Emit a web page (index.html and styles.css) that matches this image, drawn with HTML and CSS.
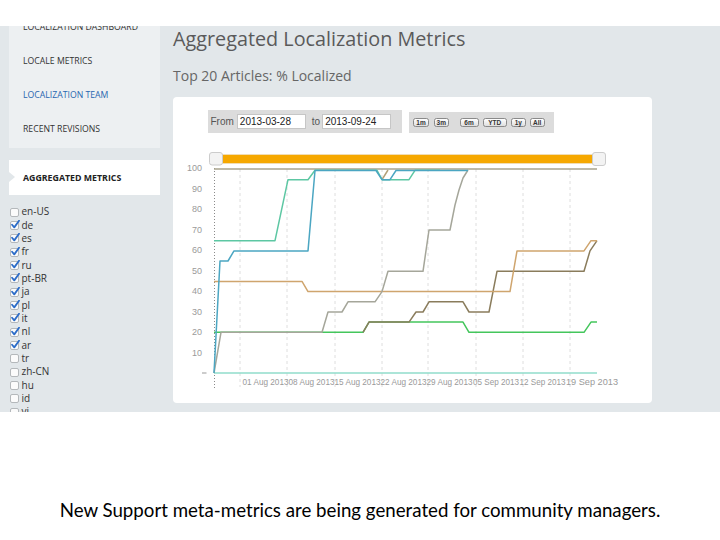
FILE: index.html
```html
<!DOCTYPE html>
<html>
<head>
<meta charset="utf-8">
<link rel="stylesheet" href="styles.css">
</head>
<body>
<div class="shot">
  <aside class="sidebar">
    <nav class="nav">
      <a class="nav-item">LOCALIZATION DASHBOARD</a>
      <a class="nav-item">LOCALE METRICS</a>
      <a class="nav-item team">LOCALIZATION TEAM</a>
      <a class="nav-item">RECENT REVISIONS</a>
    </nav>
    <div class="nav-active">AGGREGATED METRICS</div>
    <ul class="locales">
      <li><span class="cb"></span>en-US</li>
      <li><span class="cb on"><svg viewBox="0 0 11 11"><path d="M1.3 5.8 L4 9 L9.8 0.8"/></svg></span>de</li>
      <li><span class="cb on"><svg viewBox="0 0 11 11"><path d="M1.3 5.8 L4 9 L9.8 0.8"/></svg></span>es</li>
      <li><span class="cb on"><svg viewBox="0 0 11 11"><path d="M1.3 5.8 L4 9 L9.8 0.8"/></svg></span>fr</li>
      <li><span class="cb on"><svg viewBox="0 0 11 11"><path d="M1.3 5.8 L4 9 L9.8 0.8"/></svg></span>ru</li>
      <li><span class="cb on"><svg viewBox="0 0 11 11"><path d="M1.3 5.8 L4 9 L9.8 0.8"/></svg></span>pt-BR</li>
      <li><span class="cb on"><svg viewBox="0 0 11 11"><path d="M1.3 5.8 L4 9 L9.8 0.8"/></svg></span>ja</li>
      <li><span class="cb on"><svg viewBox="0 0 11 11"><path d="M1.3 5.8 L4 9 L9.8 0.8"/></svg></span>pl</li>
      <li><span class="cb on"><svg viewBox="0 0 11 11"><path d="M1.3 5.8 L4 9 L9.8 0.8"/></svg></span>it</li>
      <li><span class="cb on"><svg viewBox="0 0 11 11"><path d="M1.3 5.8 L4 9 L9.8 0.8"/></svg></span>nl</li>
      <li><span class="cb on"><svg viewBox="0 0 11 11"><path d="M1.3 5.8 L4 9 L9.8 0.8"/></svg></span>ar</li>
      <li><span class="cb"></span>tr</li>
      <li><span class="cb"></span>zh-CN</li>
      <li><span class="cb"></span>hu</li>
      <li><span class="cb"></span>id</li>
      <li><span class="cb"></span>vi</li>
    </ul>
  </aside>
  <main class="main">
    <h1 class="title">Aggregated Localization Metrics</h1>
    <h2 class="subtitle">Top 20 Articles: % Localized</h2>
    <section class="card">
      <div class="controls">
        <div class="range">
          <span class="lbl">From</span><span class="input">2013-03-28</span>
          <span class="lbl to">to</span><span class="input">2013-09-24</span>
        </div>
        <div class="zoombox">
          <span class="btn w1m">1m</span>
          <span class="btn w3m">3m</span>
          <span class="btn w6m">6m</span>
          <span class="btn wytd">YTD</span>
          <span class="btn w1y">1y</span>
          <span class="btn wall">All</span>
        </div>
      </div>
      <svg class="chart" width="479" height="260" viewBox="173 140 479 260">
        <g class="grid">
          <line x1="240" y1="169" x2="240" y2="387"/>
          <line x1="287" y1="169" x2="287" y2="387"/>
          <line x1="335" y1="169" x2="335" y2="387"/>
          <line x1="382" y1="169" x2="382" y2="387"/>
          <line x1="428" y1="169" x2="428" y2="387"/>
          <line x1="476" y1="169" x2="476" y2="387"/>
          <line x1="523" y1="169" x2="523" y2="387"/>
          <line x1="570" y1="169" x2="570" y2="387"/>
        </g>
        <line class="axis" x1="214.5" y1="168" x2="214.5" y2="388"/>
        <line class="tick" x1="202" y1="373" x2="206.5" y2="373"/>
        <g class="ylab">
          <text x="202" y="171.2">100</text>
          <text x="202" y="191.7">90</text>
          <text x="202" y="212.2">80</text>
          <text x="202" y="232.7">70</text>
          <text x="202" y="253.2">60</text>
          <text x="202" y="273.7">50</text>
          <text x="202" y="294.2">40</text>
          <text x="202" y="314.7">30</text>
          <text x="202" y="335.2">20</text>
          <text x="202" y="355.7">10</text>
        </g>
        <g class="xlab">
          <text x="242.5" y="384.5" textLength="46" lengthAdjust="spacingAndGlyphs">01 Aug 2013</text>
          <text x="288.5" y="384.5" textLength="46" lengthAdjust="spacingAndGlyphs">08 Aug 2013</text>
          <text x="334.5" y="384.5" textLength="46" lengthAdjust="spacingAndGlyphs">15 Aug 2013</text>
          <text x="380.5" y="384.5" textLength="46" lengthAdjust="spacingAndGlyphs">22 Aug 2013</text>
          <text x="426.5" y="384.5" textLength="46" lengthAdjust="spacingAndGlyphs">29 Aug 2013</text>
          <text x="473" y="384.5" textLength="46" lengthAdjust="spacingAndGlyphs">05 Sep 2013</text>
          <text x="519.5" y="384.5" textLength="46" lengthAdjust="spacingAndGlyphs">12 Sep 2013</text>
          <text x="566" y="384.5" textLength="52" lengthAdjust="spacingAndGlyphs">19 Sep 2013</text>
        </g>
        <g class="series">
          <polyline stroke="#90dccb" points="214,373 597,373"/>
          <polyline stroke="#a8a38c" points="214,169 597,169"/>
          <polyline stroke="#44c65c" points="214,332.3 363,332.3 369,322.1 463,322.1 469,332.3 584,332.3 591,322.1 597,322.1"/>
          <polyline stroke="#8a7c5c" points="363,332.3 369,322.1 409,322.1 416,312 423,312 429,301.8 463,301.8 469,312 489,312 497,271.3 584,271.3 590,250.9 597,240.7"/>
          <polyline stroke="#cfa56e" points="214,281.4 302,281.4 308,291.6 510,291.6 517,250.9 584,250.9 591,240.7 597,240.7"/>
          <polyline stroke="#a5a69a" points="214,373 221,332.3 322,332.3 328,312 342,312 348,301.8 375,301.8 382,291.6 388,271.3 423,271.3 429,230 450,230 455,205 459,190 463,178 468,170"/>
          <polyline stroke="#b3a078" points="382,179.7 388,170"/>
          <polyline stroke="#5dc7a3" points="214,240.7 275,240.7 288,179.7 308,179.7 315,170.3 377,170.3 382,179.7 409,179.7 415,170.3 440,170.3"/>
          <polyline stroke="#4ba6c2" points="214,373 220,261 228,261 234,250.9 308,250.9 315,170.5 376,170.5 382,179.7 390,179.7 396,170.5 468,170.5"/>
        </g>
        <rect class="navbar" x="222" y="154.5" width="372" height="9"/>
        <rect class="handle" x="209.5" y="152.5" width="13" height="12.5" rx="2.5"/>
        <rect class="handle" x="592.5" y="152.5" width="13" height="13" rx="2.5"/>
      </svg>
    </section>
  </main>
</div>
<p class="caption">New Support meta-metrics are being generated for community managers.</p>
</body>
</html>
```

FILE: styles.css
```css
html, body {
  margin: 0;
  padding: 0;
  background: #ffffff;
}

body {
  width: 720px;
  height: 540px;
  overflow: hidden;
}

.shot {
  margin-top: 26px;
  height: 386px;
  background: #e2e7ea;
  display: flex;
  overflow: hidden;
  font-family: "Open Sans", "Liberation Sans", sans-serif;
}

.sidebar {
  flex: none;
  width: 151px;
  padding-left: 9px;
}

.nav {
  margin-top: -16px;
  background: #edf0f2;
  padding-bottom: 2px;
}

.nav-item {
  display: flex;
  align-items: center;
  height: 34px;
  padding-left: 14px;
  font-size: 8.7px;
  color: #333;
  text-decoration: none;
}

.nav-item.team {
  color: #2866b0;
}

.nav-active {
  position: relative;
  margin-top: 12px;
  height: 35px;
  background: #ffffff;
  display: flex;
  align-items: center;
  padding-left: 14px;
  font-size: 8.8px;
  font-weight: 700;
  color: #222;
}

.nav-active::before {
  content: "";
  position: absolute;
  left: 0;
  top: 12px;
  border-left: 6px solid #e2e7ea;
  border-top: 5.5px solid transparent;
  border-bottom: 5.5px solid transparent;
}

.locales {
  list-style: none;
  margin: 10px 0 0;
  padding: 0;
}

.locales li {
  height: 13.35px;
  display: flex;
  align-items: center;
  font-size: 10px;
  line-height: 13px;
  color: #333;
}

.cb {
  position: relative;
  flex: none;
  width: 7px;
  height: 7px;
  margin-left: 1px;
  margin-right: 2.5px;
  margin-top: 1px;
  border: 1px solid #b4b8bb;
  border-radius: 2px;
  background: #fbfbfb;
}

.cb svg {
  position: absolute;
  left: 0;
  top: -2px;
  width: 9px;
  height: 9px;
}

.cb svg path {
  fill: none;
  stroke: #2c6cc8;
  stroke-width: 2.2;
  stroke-linecap: round;
  stroke-linejoin: round;
}

.main {
  flex: 1;
  padding-left: 13px;
}

.title {
  margin: 0;
  font-size: 19.8px;
  line-height: 26px;
  font-weight: 400;
  color: #5a5a5a;
}

.subtitle {
  margin: 13.5px 0 0;
  font-size: 14px;
  line-height: 20px;
  font-weight: 400;
  color: #666;
}

.card {
  margin-top: 11.5px;
  width: 479px;
  height: 306px;
  box-sizing: border-box;
  padding-top: 13px;
  background: #ffffff;
  border-radius: 4px;
}

.controls {
  display: flex;
  align-items: flex-start;
  margin-left: 34.5px;
  height: 23px;
}

.range {
  display: flex;
  align-items: center;
  width: 194.5px;
  height: 23px;
  box-sizing: border-box;
  padding-left: 3px;
  background: #dcdcdc;
  font-family: "Liberation Sans", sans-serif;
  font-size: 10px;
  color: #555;
}

.lbl {
  margin-right: 3px;
}

.lbl.to {
  margin-left: 6px;
  margin-right: 2px;
}

.input {
  width: 69px;
  height: 15px;
  box-sizing: border-box;
  padding-left: 2px;
  border: 1px solid #c6c6c6;
  background: #ffffff;
  color: #222;
  line-height: 13px;
}

.zoombox {
  display: flex;
  align-items: center;
  margin-left: 7px;
  margin-top: 1.5px;
  width: 145px;
  height: 21px;
  box-sizing: border-box;
  padding-left: 4px;
  gap: 4.5px;
  background: #dcdcdc;
  font-family: "Liberation Sans", sans-serif;
}

.btn {
  height: 9px;
  box-sizing: border-box;
  border: 1px solid #8a8a8a;
  border-radius: 2.5px;
  background: linear-gradient(#ffffff, #dedede);
  font-size: 6.5px;
  font-weight: 700;
  line-height: 7px;
  color: #333;
  text-align: center;
}

.w1m { width: 16px; }
.w3m { width: 15.5px; }
.w6m { width: 19px; margin-left: 6px; }
.wytd { width: 23.5px; }
.w1y { width: 14.5px; }
.wall { width: 14.5px; }

.chart {
  display: block;
  margin-top: 7px;
}

.grid line {
  stroke: #dedede;
  stroke-width: 1;
  stroke-dasharray: 3 3;
}

.axis {
  stroke: #8a8a8a;
  stroke-width: 1;
  stroke-dasharray: 1 2;
}

.tick {
  stroke: #999;
  stroke-width: 1;
}

.ylab text {
  font-family: "Liberation Sans", sans-serif;
  font-size: 9px;
  fill: #9a9a9a;
  text-anchor: end;
}

.xlab text {
  font-family: "Liberation Sans", sans-serif;
  font-size: 9px;
  fill: #9a9a9a;
}

.series polyline {
  fill: none;
  stroke-width: 1.5;
  stroke-linejoin: round;
}

.navbar {
  fill: #f6a800;
  stroke: #e8e8e8;
  stroke-width: 0.5;
}

.handle {
  fill: #f3f3f3;
  stroke: #cccccc;
  stroke-width: 1;
}

.caption {
  margin: 87px 0 0;
  text-align: center;
  font-family: Lato, "Open Sans", sans-serif;
  font-size: 18.7px;
  line-height: 22px;
  color: #000;
}
```
